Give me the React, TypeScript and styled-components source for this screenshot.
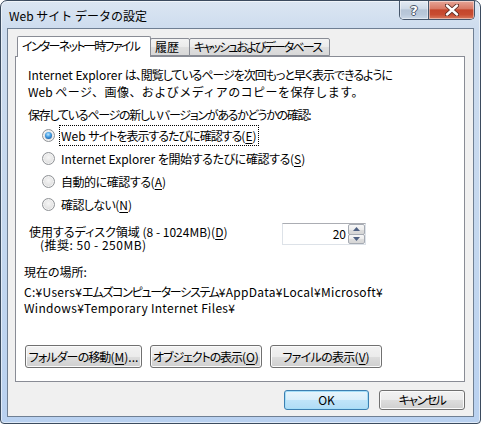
import React from "react";
import styled, { createGlobalStyle } from "styled-components";

const Global = createGlobalStyle`
  html, body { margin: 0; padding: 0; background: #ffffff; }
  body { width: 481px; height: 424px; overflow: hidden; }
  * { box-sizing: border-box; }
`;

const FONT = `"Noto Sans CJK JP", "Noto Sans", sans-serif`;

const Window = styled.div`
  width: 481px;
  height: 424px;
  border: 1px solid #3b4b5e;
  border-radius: 7px 7px 4px 4px;
  background: linear-gradient(180deg, #dbe6f2 0%, #cddcee 28px, #c3d7ef 60%, #b9d1f0 100%);
  box-shadow: inset 0 0 0 1px rgba(255, 255, 255, 0.55);
  padding: 0 6px 6px 6px;
  display: flex;
  flex-direction: column;
  font-family: ${FONT};
  font-size: 12px;
  color: #000;
  font-feature-settings: "palt";
`;

const TitleBar = styled.div`
  height: 27px;
  display: flex;
  align-items: flex-start;
  flex-shrink: 0;
`;

const TitleText = styled.div`
  margin: 7px 0 0 2px;
  font-size: 12px;
  line-height: 16px;
  font-feature-settings: normal;
  color: #000;
`;

const CaptionGroup = styled.div`
  margin-left: auto;
  margin-right: -1px;
  display: flex;
  height: 19px;
  border: 1px solid #46566b;
  border-top: none;
  border-radius: 0 0 5px 5px;
  overflow: hidden;
`;

const CaptionButton = styled.div<{ $w: number; $close?: boolean }>`
  width: ${(p) => p.$w}px;
  height: 100%;
  display: flex;
  align-items: center;
  justify-content: center;
  background: ${(p) =>
    p.$close
      ? "linear-gradient(180deg, #e6a597 0%, #d97a66 42%, #c4462c 50%, #c84c31 75%, #d87a5e 100%)"
      : "linear-gradient(180deg, #e4ebf3 0%, #cfdae7 42%, #b5c4d6 50%, #b9c8da 75%, #cbd8e7 100%)"};
  box-shadow: inset 0 0 0 1px rgba(255, 255, 255, 0.45);
  & + & {
    border-left: 1px solid #46566b;
  }
`;

const HelpGlyph = styled.span`
  font-family: "DejaVu Sans", sans-serif;
  font-weight: bold;
  font-size: 13px;
  line-height: 1;
  color: #ffffff;
  text-shadow: 1px 0 0 #4a5668, -1px 0 0 #4a5668, 0 1px 0 #4a5668, 0 -1px 0 #4a5668;
`;

const Client = styled.div`
  flex: 1;
  background: #f0f0f0;
  border: 1px solid #6f7f93;
  display: flex;
  flex-direction: column;
  padding: 7px 8px 6px 7px;
`;

const TabRow = styled.div`
  display: flex;
  align-items: flex-end;
  padding-left: 2px;
  height: 20px;
  position: relative;
  z-index: 1;
`;

const Tab = styled.div<{ $w: number; $active?: boolean; $ls?: number }>`
  width: ${(p) => p.$w}px;
  height: ${(p) => (p.$active ? 21 : 18)}px;
  margin-bottom: ${(p) => (p.$active ? -1 : 0)}px;
  margin-left: -1px;
  border: 1px solid #898c95;
  border-bottom: ${(p) => (p.$active ? "none" : "1px solid #898c95")};
  border-radius: 2px 2px 0 0;
  background: ${(p) =>
    p.$active ? "#ffffff" : "linear-gradient(180deg, #f3f3f3 0%, #ebebeb 50%, #dfdfdf 51%, #d8d8d8 100%)"};
  padding: ${(p) => (p.$active ? "1px 0 0 4px" : "0 0 0 4px")};
  line-height: 16px;
  letter-spacing: ${(p) => p.$ls ?? 0}px;
  white-space: nowrap;
  overflow: hidden;
  &:first-child {
    margin-left: 0;
  }
`;

const Panel = styled.div`
  flex: 1;
  background: #ffffff;
  border: 1px solid #898c95;
  display: flex;
  flex-direction: column;
  padding: 9px 12px 13px 8px;
`;

const Group = styled.div`
  padding-left: 4px;
  display: flex;
  flex-direction: column;
`;

const Jp = styled.span<{ $ls?: number; $full?: boolean }>`
  letter-spacing: ${(p) => p.$ls ?? 0}px;
  font-feature-settings: ${(p) => (p.$full ? "normal" : '"palt"')};
`;

const Para = styled.p`
  margin: 0;
  line-height: 17px;
  white-space: nowrap;
`;

const Heading = styled.div`
  margin-top: 6px;
  line-height: 17px;
`;

const RadioList = styled.div`
  margin-top: 1px;
  display: flex;
  flex-direction: column;
`;

const RadioRow = styled.div`
  height: 23px;
  display: flex;
  align-items: center;
  padding-left: 14px;
  gap: 4px;
`;

const RadioCircle = styled.span<{ $checked?: boolean }>`
  width: 13px;
  height: 13px;
  border-radius: 50%;
  border: 1px solid #8f9296;
  background: radial-gradient(circle at 50% 40%, #f6f6f6 0%, #e4e4e4 55%, #cfcfcf 100%);
  box-shadow: inset 0 0 0 1px #f4f4f4;
  display: flex;
  align-items: center;
  justify-content: center;
  flex-shrink: 0;
  &::after {
    content: "";
    display: ${(p) => (p.$checked ? "block" : "none")};
    width: 7px;
    height: 7px;
    border-radius: 50%;
    background: radial-gradient(circle at 45% 35%, #bfe6ff 0%, #4aa3e6 40%, #1c5fa8 80%, #173f78 100%);
  }
`;

const RadioLabel = styled.span<{ $focus?: boolean }>`
  line-height: 17px;
  padding: 1px 1px;
  border: 1px dotted ${(p) => (p.$focus ? "#000" : "transparent")};
  white-space: nowrap;
`;

const U = styled.span`
  text-decoration: underline;
  text-underline-offset: 2px;
`;

const DiskRow = styled.div`
  margin-top: 7px;
  display: flex;
  align-items: flex-start;
  padding-left: 1px;
`;

const DiskLabel = styled.div`
  margin-top: 2px;
  line-height: 13px;
  white-space: nowrap;
`;

const Indent = styled.div`
  padding-left: 11px;
  letter-spacing: 0.5px;
`;

const SpinBox = styled.div`
  margin-left: auto;
  margin-right: 86px;
  width: 84px;
  height: 22px;
  border: 1px solid #dde2e8;
  border-top-color: #abadb3;
  background: #fff;
  display: flex;
  align-items: stretch;
`;

const SpinValue = styled.div`
  flex: 1;
  text-align: right;
  padding-right: 2px;
  line-height: 20px;
`;

const SpinButtons = styled.div`
  width: 17px;
  display: flex;
  flex-direction: column;
`;

const SpinBtn = styled.div`
  flex: 1;
  border: 1px solid #a6abb3;
  border-radius: 2px;
  background: linear-gradient(180deg, #f7f7f7 0%, #ececec 50%, #dedede 51%, #d6d6d6 100%);
  display: flex;
  align-items: center;
  justify-content: center;
  & + & {
    margin-top: -1px;
  }
`;

const SectionLabel = styled.div`
  margin-top: 12px;
  line-height: 17px;
`;

const PathText = styled.div`
  margin-top: 4px;
  line-height: 16px;
  letter-spacing: 0.3px;
  white-space: nowrap;
`;

const ButtonRow = styled.div<{ $end?: boolean }>`
  display: flex;
  gap: ${(p) => (p.$end ? 10 : 8)}px;
  justify-content: ${(p) => (p.$end ? "flex-end" : "flex-start")};
`;

const PanelButtons = styled(ButtonRow)`
  margin-top: auto;
  margin-left: 1px;
`;

const FooterButtons = styled(ButtonRow)`
  margin-top: 8px;
`;

const Button = styled.div<{ $w: number; $h?: number; $default?: boolean }>`
  width: ${(p) => p.$w}px;
  height: ${(p) => p.$h ?? 23}px;
  border: 1px solid ${(p) => (p.$default ? "#3c7fb1" : "#707070")};
  border-radius: 3px;
  background: ${(p) =>
    p.$default
      ? "linear-gradient(180deg, #e8f5fc 0%, #d8eefb 50%, #bfe4f9 51%, #b0dcf5 100%)"
      : "linear-gradient(180deg, #f2f2f2 0%, #ebebeb 50%, #dddddd 51%, #cfcfcf 100%)"};
  box-shadow: inset 0 0 0 1px ${(p) => (p.$default ? "#a5def8" : "#fbfbfb")};
  display: flex;
  align-items: center;
  justify-content: center;
  white-space: nowrap;
  line-height: 16px;
`;

const Tri = ({ up }: { up?: boolean }) => (
  <svg width="7" height="4" viewBox="0 0 7 4">
    <path d={up ? "M0 4 L3.5 0 L7 4 Z" : "M0 0 L3.5 4 L7 0 Z"} fill="#4e6082" />
  </svg>
);

export default function App() {
  return (
    <>
      <Global />
      <Window>
        <TitleBar>
          <TitleText>Web サイト データの設定</TitleText>
          <CaptionGroup>
            <CaptionButton $w={28}>
              <HelpGlyph>?</HelpGlyph>
            </CaptionButton>
            <CaptionButton $w={46} $close>
              <svg width="14" height="12" viewBox="0 0 14 12">
                <path d="M2 1.5 L12 10.5 M12 1.5 L2 10.5" stroke="#5a2a22" strokeWidth="4.2" strokeLinecap="round" />
                <path d="M2 1.5 L12 10.5 M12 1.5 L2 10.5" stroke="#ffffff" strokeWidth="2.4" strokeLinecap="round" />
              </svg>
            </CaptionButton>
          </CaptionGroup>
        </TitleBar>
        <Client>
          <TabRow>
            <Tab $w={134} $active $ls={-1.7}>
              インターネット一時ファイル
            </Tab>
            <Tab $w={40}>履歴</Tab>
            <Tab $w={141} $ls={-1.85}>
              キャッシュおよびデータベース
            </Tab>
          </TabRow>
          <Panel>
            <Group>
              <Para>
                Internet Explorer <Jp $ls={-1.05}>は、閲覧しているページを次回もっと早く表示できるように</Jp>
                <br />
                Web <Jp $full $ls={0.45}>ページ、画像、およびメディアのコピーを保存します。</Jp>
              </Para>
              <Heading>
                <Jp $ls={-1.27}>保存しているページの新しいバージョンがあるかどうかの確認:</Jp>
              </Heading>
              <RadioList>
                <RadioRow>
                  <RadioCircle $checked />
                  <RadioLabel $focus>
                    Web <Jp $ls={-1}>サイトを表示するたびに確認する</Jp>(<U>E</U>)
                  </RadioLabel>
                </RadioRow>
                <RadioRow>
                  <RadioCircle />
                  <RadioLabel>
                    Internet Explorer <Jp $ls={-0.4}>を開始するたびに確認する</Jp>(<U>S</U>)
                  </RadioLabel>
                </RadioRow>
                <RadioRow>
                  <RadioCircle />
                  <RadioLabel>
                    <Jp $ls={-0.45}>自動的に確認する</Jp>(<U>A</U>)
                  </RadioLabel>
                </RadioRow>
                <RadioRow>
                  <RadioCircle />
                  <RadioLabel>
                    <Jp $ls={-0.6}>確認しない</Jp>(<U>N</U>)
                  </RadioLabel>
                </RadioRow>
              </RadioList>
              <DiskRow>
                <DiskLabel>
                  <div>
                    使用するディスク領域 (8 - 1024MB)(<U>D</U>)
                  </div>
                  <Indent>(推奨: 50 - 250MB)</Indent>
                </DiskLabel>
                <SpinBox>
                  <SpinValue>20</SpinValue>
                  <SpinButtons>
                    <SpinBtn>
                      <Tri up />
                    </SpinBtn>
                    <SpinBtn>
                      <Tri />
                    </SpinBtn>
                  </SpinButtons>
                </SpinBox>
              </DiskRow>
            </Group>
            <SectionLabel>現在の場所:</SectionLabel>
            <PathText>
              C:¥Users¥<Jp $ls={-1.3}>エムズコンピューターシステム</Jp>¥AppData¥Local¥Microsoft¥
              <br />
              Windows¥Temporary Internet Files¥
            </PathText>
            <PanelButtons>
              <Button $w={117}>
                <Jp $ls={-0.9}>フォルダーの移動</Jp>(<U>M</U>)...
              </Button>
              <Button $w={112}>
                <Jp $ls={-1.1}>オブジェクトの表示</Jp>(<U>O</U>)
              </Button>
              <Button $w={112}>
                <Jp $ls={-0.7}>ファイルの表示</Jp>(<U>V</U>)
              </Button>
            </PanelButtons>
          </Panel>
          <FooterButtons $end>
            <Button $w={85} $h={20} $default>
              OK
            </Button>
            <Button $w={86} $h={20}>
              <Jp $ls={-1.5}>キャンセル</Jp>
            </Button>
          </FooterButtons>
        </Client>
      </Window>
    </>
  );
}
